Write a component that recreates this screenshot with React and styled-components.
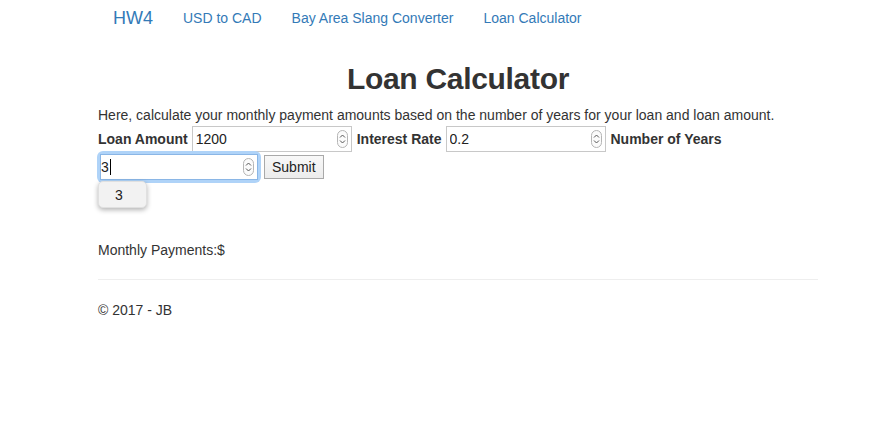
import React from "react";
import styled, { createGlobalStyle } from "styled-components";

const GlobalStyle = createGlobalStyle`
  body {
    margin: 0;
    background: #fff;
    color: #333;
    font-family: "Liberation Sans", Arial, sans-serif;
    font-size: 14px;
    line-height: 20px;
  }
`;

const Page = styled.div`
  width: 720px;
  margin-left: 98px;
`;

const Nav = styled.nav`
  height: 35px;
  display: flex;
  align-items: center;
  padding-left: 15px;
`;

const Brand = styled.a`
  font-size: 18px;
  color: #337ab7;
  text-decoration: none;
  margin-right: 30px;
`;

const NavLink = styled.a`
  font-size: 14px;
  color: #337ab7;
  text-decoration: none;
  margin-right: 30px;
`;

const Title = styled.h2`
  margin: 27px 0 10px;
  text-align: center;
  font-size: 30px;
  line-height: 33px;
  font-weight: bold;
  letter-spacing: -0.3px;
`;

const Intro = styled.p`
  margin: 0;
`;

const Form = styled.form`
  margin: 0;
  line-height: 26px;
`;

const Row = styled.div`
  display: flex;
  align-items: center;
  gap: 4px;
  height: ${(p) => p.h || 26}px;
  margin-top: ${(p) => p.mt || 0}px;
`;

const Label = styled.label`
  font-weight: bold;
`;

const Field = styled.span`
  position: relative;
  display: inline-block;
  width: 160px;
  height: 26px;
  margin-right: 1px;
  ${(p) =>
    p.focused &&
    `
    width: 158px;
    margin-left: 2px;
    border-radius: 3px;
    box-shadow: 0 0 0 3px #afd3f8;
  `}
`;

const Input = styled.input`
  box-sizing: border-box;
  width: 100%;
  height: 100%;
  border: 1px solid ${(p) => (p.focused ? "#8ab6e6" : "#c8c8c8")};
  padding: 0 20px 0 ${(p) => (p.focused ? 0 : 3)}px;
  font-family: "Liberation Sans", Arial, sans-serif;
  font-size: 14px;
  color: #222;
  background: #fff;
  outline: none;
`;

const Spinner = styled.span`
  position: absolute;
  right: 4px;
  top: 4px;
  width: 11px;
  height: 18px;
  box-sizing: border-box;
  border: 1px solid #b5b5b5;
  border-radius: 6px;
  background: #fbfbfb;
  display: flex;
  align-items: center;
  justify-content: center;
`;

const Caret = styled.span`
  position: absolute;
  left: 10px;
  top: 5px;
  width: 1px;
  height: 16px;
  background: #000;
`;

const Button = styled.button`
  height: 24px;
  margin-left: 1px;
  padding: 0 7px;
  border: 1px solid #a9a9a9;
  background: linear-gradient(#f8f8f8, #ececec);
  font-family: "Liberation Sans", Arial, sans-serif;
  font-size: 14px;
  color: #222;
`;

const Suggestion = styled.div`
  position: absolute;
  left: 98px;
  top: 181px;
  width: 49px;
  height: 27px;
  box-sizing: border-box;
  padding-left: 16px;
  line-height: 27px;
  border-radius: 5px;
  background: #f2f2f2;
  border: 1px solid #e0e0e0;
  box-shadow: 0 2px 5px rgba(0, 0, 0, 0.3);
  font-size: 14px;
  color: #222;
`;

const Result = styled.div`
  margin-top: 59px;
`;

const Rule = styled.hr`
  margin: 19px 0 20px;
  border: 0;
  border-top: 1px solid #eee;
`;

const Footer = styled.footer``;

const Arrows = () => (
  <svg width="7" height="12" viewBox="0 0 7 12">
    <path d="M1 4.5 L3.5 2 L6 4.5 M1 7.5 L3.5 10 L6 7.5" fill="none" stroke="#555" strokeWidth="1" />
  </svg>
);

const NumberField = ({ value, focused }) => (
  <Field focused={focused}>
    <Input type="text" defaultValue={value} focused={focused} />
    <Spinner>
      <Arrows />
    </Spinner>
    {focused && <Caret />}
  </Field>
);

export default function App() {
  return (
    <>
      <GlobalStyle />
      <Page>
        <Nav>
          <Brand href="#">HW4</Brand>
          <NavLink href="#">USD to CAD</NavLink>
          <NavLink href="#">Bay Area Slang Converter</NavLink>
          <NavLink href="#">Loan Calculator</NavLink>
        </Nav>
        <Title>Loan Calculator</Title>
        <Intro>
          Here, calculate your monthly payment amounts based on the number of years for your loan and loan amount.
        </Intro>
        <Form onSubmit={(e) => e.preventDefault()}>
          <Row mt={1}>
            <Label>Loan Amount</Label>
            <NumberField value="1200" />
            <Label>Interest Rate</Label>
            <NumberField value="0.2" />
            <Label>Number of Years</Label>
          </Row>
          <Row mt={1} h={28}>
            <NumberField value="3" focused />
            <Button type="submit">Submit</Button>
          </Row>
        </Form>
        <Result>Monthly Payments:$</Result>
        <Rule />
        <Footer>© 2017 - JB</Footer>
      </Page>
      <Suggestion>3</Suggestion>
    </>
  );
}
